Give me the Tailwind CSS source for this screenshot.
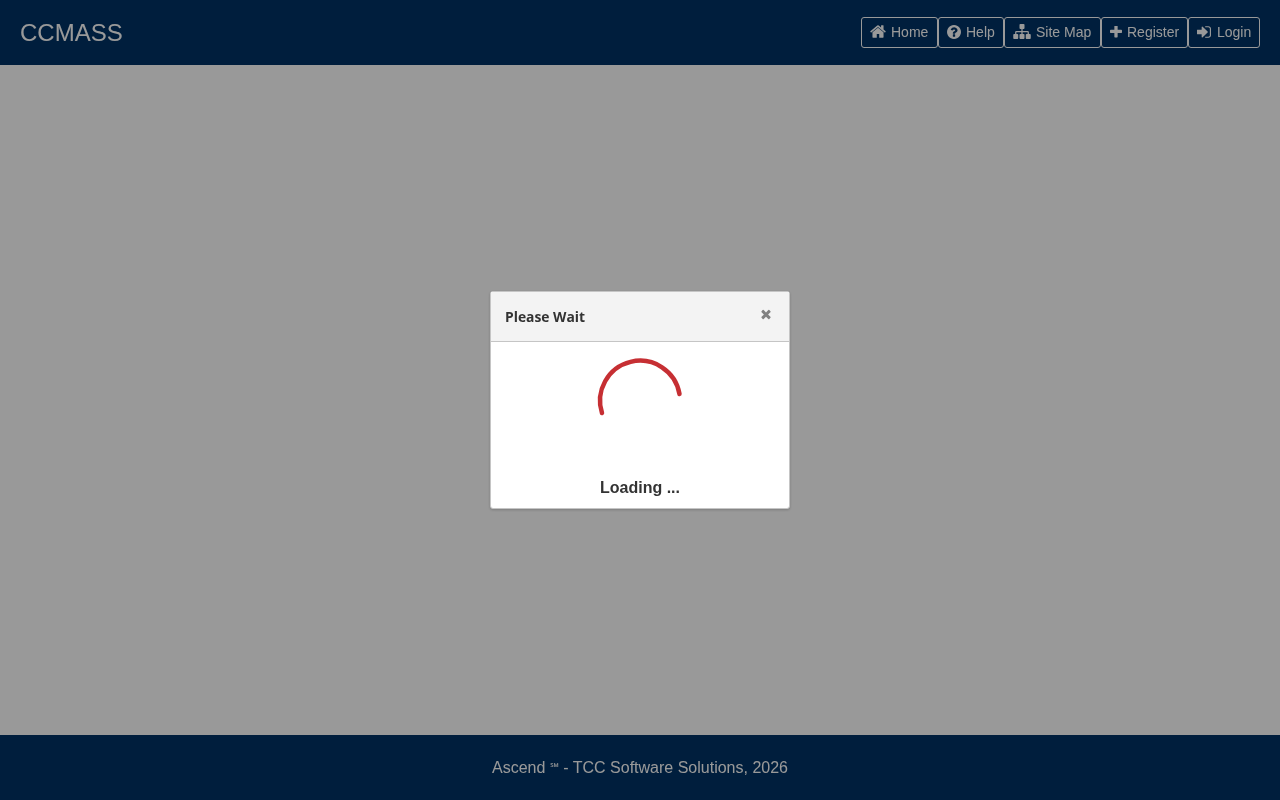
<!DOCTYPE html>
<html lang="en">
<head>
    <meta charset="UTF-8">
    <meta name="viewport" content="width=device-width, initial-scale=1.0">
    <title>CCMASS</title>
    <script src="https://cdn.jsdelivr.net/npm/@tailwindcss/browser@4"></script>
</head>
<body class="bg-white font-['Liberation_Sans',Arial,sans-serif]">
    <div class="flex flex-col h-[800px] will-change-transform">
        <!-- header -->
        <header class="h-[65px] bg-[#003366] flex items-center justify-between px-5 text-white">
            <a class="text-2xl leading-[30px]">CCMASS</a>
            <nav class="flex text-sm">
                <a class="flex items-center h-[31px] w-[77px] pl-2 pb-[2px] gap-[5px] border border-white rounded-[3px]">
                    <svg class="w-[16px] h-[13px] fill-current" viewBox="64 256 1664 1280"><path d="M1472 992v480q0 26-19 45t-45 19h-384v-384h-256v384h-384q-26 0-45-19t-19-45v-480q0-1 .5-3t.5-3l575-474 575 474q1 2 1 6zm223-69l-62 74q-8 9-21 11h-3q-13 0-21-7l-692-577-692 577q-12 8-24 7-13-2-21-11l-62-74q-8-10-7-23.5t11-21.5l719-599q32-26 76-26t76 26l244 204v-195q0-14 9-23t23-9h192q14 0 23 9t9 23v408l219 182q10 8 11 21.5t-7 23.5z"/></svg>
                    Home
                </a>
                <a class="flex items-center h-[31px] w-[66px] pl-2 pb-[2px] gap-[5px] border border-white rounded-[3px]">
                    <svg class="w-[14px] h-[14px] fill-current" viewBox="128 128 1536 1536"><path d="M1024 1376v-192q0-14-9-23t-23-9h-192q-14 0-23 9t-9 23v192q0 14 9 23t23 9h192q14 0 23-9t9-23zm256-672q0-88-55.5-163t-138.5-116-170-41q-243 0-371 213-15 24 8 42l132 100q7 6 19 6 16 0 25-12 53-68 86-92 34-24 86-24 48 0 85.5 26t37.5 59q0 38-20 61t-68 45q-63 28-115.5 86.5t-52.5 125.5v36q0 14 9 23t23 9h192q14 0 23-9t9-23q0-19 21.5-49.5t54.5-49.5q32-18 49-28.5t46-35 44.5-48 28-60.5 12.5-81zm384 192q0 209-103 385.5t-279.5 279.5-385.5 103-385.5-103-279.5-279.5-103-385.5 103-385.5 279.5-279.5 385.5-103 385.5 103 279.5 279.5 103 385.5z"/></svg>
                    Help
                </a>
                <a class="flex items-center h-[31px] w-[97px] pl-2 pb-[2px] gap-[5px] border border-white rounded-[3px]">
                    <svg class="w-[18px] h-[15px] fill-current" viewBox="0 128 1792 1536"><path d="M1792 1248v320q0 40-28 68t-68 28h-320q-40 0-68-28t-28-68v-320q0-40 28-68t68-28h96v-192h-512v192h96q40 0 68 28t28 68v320q0 40-28 68t-68 28h-320q-40 0-68-28t-28-68v-320q0-40 28-68t68-28h96v-192h-512v192h96q40 0 68 28t28 68v320q0 40-28 68t-68 28h-320q-40 0-68-28t-28-68v-320q0-40 28-68t68-28h96v-192q0-52 38-90t90-38h512v-192h-96q-40 0-68-28t-28-68v-320q0-40 28-68t68-28h320q40 0 68 28t28 68v320q0 40-28 68t-68 28h-96v192h512q52 0 90 38t38 90v192h96q40 0 68 28t28 68z"/></svg>
                    Site Map
                </a>
                <a class="flex items-center h-[31px] w-[87px] pl-2 pb-[2px] gap-[5px] border border-white rounded-[3px]">
                    <svg class="w-[12px] h-[12px] fill-current" viewBox="192 192 1408 1408"><path d="M1600 736v192q0 40-28 68t-68 28h-416v416q0 40-28 68t-68 28h-192q-40 0-68-28t-28-68v-416h-416q-40 0-68-28t-28-68v-192q0-40 28-68t68-28h416v-416q0-40 28-68t68-28h192q40 0 68 28t28 68v416h416q40 0 68 28t28 68z"/></svg>
                    Register
                </a>
                <a class="flex items-center h-[31px] w-[72px] pl-2 pb-[2px] gap-[6px] border border-white rounded-[3px]">
                    <svg class="w-[14px] h-[12px] fill-current" viewBox="128 256 1536 1280"><path d="M1312 896q0 26-19 45l-544 544q-19 19-45 19t-45-19-19-45v-288h-448q-26 0-45-19t-19-45v-384q0-26 19-45t45-19h448v-288q0-26 19-45t45-19 45 19l544 544q19 19 19 45zm352-352v704q0 119-84.5 203.5t-203.5 84.5h-320q-13 0-22.5-9.5t-9.5-22.5q0-4-1-20t-.5-26.5 3-23.5 10-19.5 20.5-6.5h320q66 0 113-47t47-113v-704q0-66-47-113t-113-47h-312l-11.5-1-11.5-3-8-5.5-7-9-2-13.5q0-4-1-20t-.5-26.5 3-23.5 10-19.5 20.5-6.5h320q119 0 203.5 84.5t84.5 203.5z"/></svg>
                    Login
                </a>
            </nav>
        </header>

        <main class="flex-1"></main>

        <!-- footer -->
        <footer class="h-[65px] pt-[1px] bg-[#003366] flex items-center justify-center text-white text-base">
            <span>Ascend <span class="text-[11px] align-[2px]">℠</span> - TCC Software Solutions, 2026</span>
        </footer>
    </div>

    <!-- loading dialog -->
    <div class="fixed inset-0 bg-black/40 flex items-center justify-center will-change-transform">
        <div class="w-[300px] h-[218px] bg-white border border-[#c5c5c5] rounded-[3px] shadow-[0_1px_3px_rgba(0,0,0,0.2)] flex flex-col text-[#333333]">
            <div class="h-[50px] shrink-0 bg-[#f3f3f3] border-b border-[#c5c5c5] flex justify-between pl-[14px] pr-[16px]">
                <span class="font-['Open_Sans',sans-serif] font-bold text-[13.85px] leading-[49px]">Please Wait</span>
                <svg class="w-[14px] h-[14px] mt-[15px] fill-[#808080]" viewBox="0 0 1792 1792"><path d="M1490 1322q0 40-28 68l-136 136q-28 28-68 28t-68-28l-294-294-294 294q-28 28-68 28t-68-28l-136-136q-28-28-28-68t28-68l294-294-294-294q-28-28-28-68t28-68l136-136q28-28 68-28t68 28l294 294 294-294q28-28 68-28t68 28l136 136q28 28 28 68t-28 68l-294 294 294 294q28 28 28 68z"/></svg>
            </div>
            <div class="flex-1 flex flex-col items-center">
                <svg class="w-[100px] h-[100px] mt-[9px] fill-none stroke-[#c62f33] stroke-[4.5px]" viewBox="0 0 100 100" stroke-linecap="round"><path d="M12 62A40 40 0 1 1 89.5 43"/></svg>
                <span class="mt-[27px] font-bold text-base leading-5">Loading ...</span>
            </div>
        </div>
    </div>
</body>
</html>
